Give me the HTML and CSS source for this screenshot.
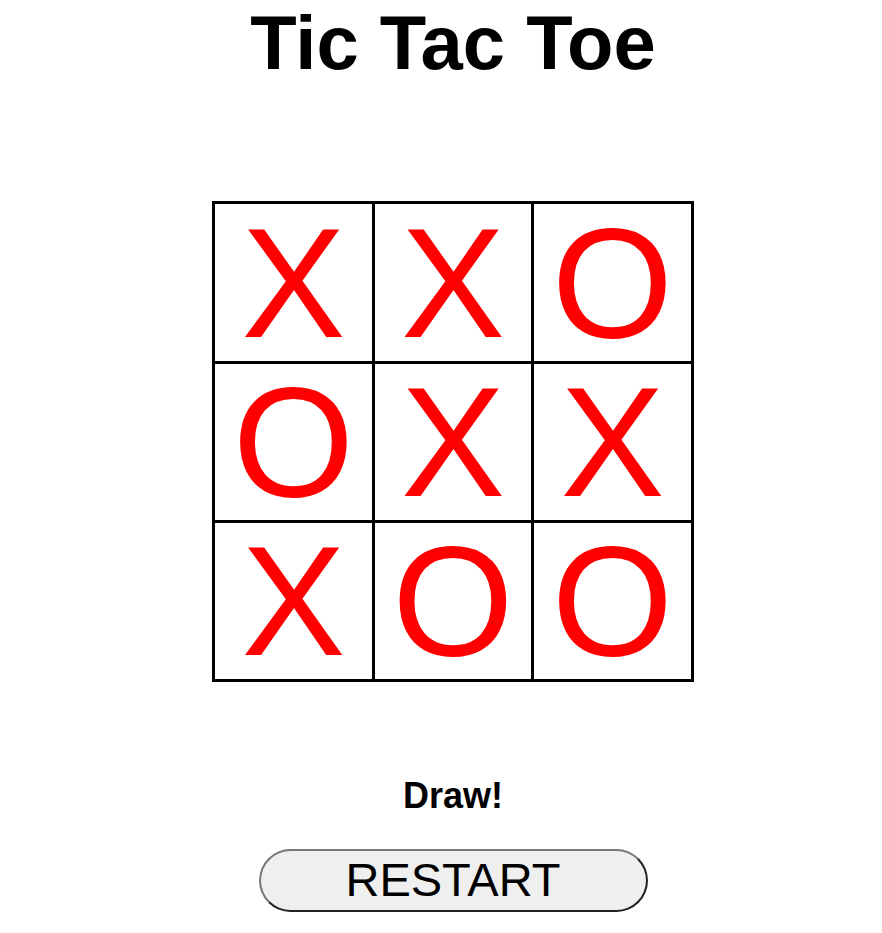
FILE: index.html
```
<!DOCTYPE html>
<html lang="en">
<head>
<meta charset="utf-8">
<title>Tic Tac Toe</title>
<link rel="stylesheet" href="styles.css">
</head>
<body>
<main class="game">
  <h1 class="title">Tic Tac Toe</h1>
  <div class="board">
    <div class="cell">X</div>
    <div class="cell">X</div>
    <div class="cell">O</div>
    <div class="cell">O</div>
    <div class="cell">X</div>
    <div class="cell">X</div>
    <div class="cell">X</div>
    <div class="cell">O</div>
    <div class="cell">O</div>
  </div>
  <p class="status">Draw!</p>
  <button class="restart" type="button">RESTART</button>
</main>
</body>
</html>
```

FILE: styles.css
```
html, body {
  margin: 0;
  padding: 0;
  background: #ffffff;
}

body {
  font-family: "Liberation Sans", Arial, sans-serif;
  color: #000000;
}

.game {
  display: flex;
  flex-direction: column;
  align-items: center;
  padding-left: 24px;
}

.title {
  margin: 0;
  font-size: 76px;
  line-height: 1.12;
  font-weight: bold;
}

.board {
  margin-top: 116px;
  display: grid;
  grid-template-columns: 157px 156px 157px;
  grid-template-rows: 157px 156px 156px;
  gap: 3px;
  border: 3px solid #000000;
  background: #000000;
}

.cell {
  background: #ffffff;
  color: #ff0000;
  font-size: 156px;
  line-height: 1;
  display: flex;
  align-items: center;
  justify-content: center;
}

.status {
  margin: 96px 0 0;
  font-size: 36px;
  line-height: 1;
  font-weight: bold;
}

.restart {
  margin-top: 35px;
  width: 389px;
  height: 63px;
  box-sizing: border-box;
  padding: 0 0 3px;
  border: 2px outset #767676;
  border-radius: 32px;
  background: #efefef;
  font-family: "Liberation Sans", Arial, sans-serif;
  font-size: 47px;
  line-height: 1;
  color: #000000;
}
```
